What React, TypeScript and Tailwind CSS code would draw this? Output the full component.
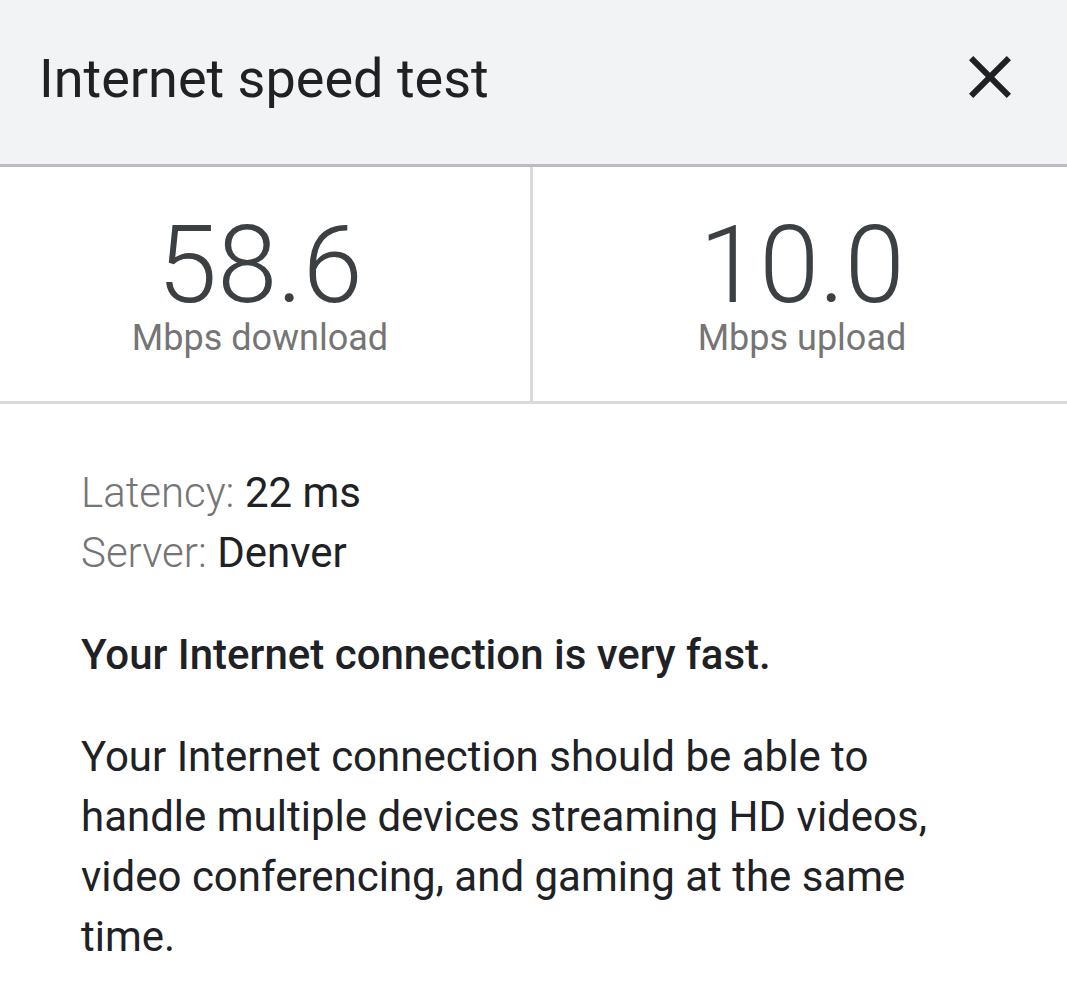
import React from 'react';

const results = [
  { value: '58.6', label: 'Mbps download' },
  { value: '10.0', label: 'Mbps upload' },
];

const details = [
  { name: 'Latency:', value: '22 ms' },
  { name: 'Server:', value: 'Denver' },
];

const App: React.FC = () => {
  return (
    <div className="min-h-[1005px] bg-white font-[Roboto,sans-serif] text-[#202124]">
      <header className="flex h-[167px] items-center justify-between border-b-3 border-[#bcbcc0] bg-[#f1f3f4] pb-2.5 pl-[39px] pr-14">
        <h1 className="pt-1 text-[54px] leading-none">Internet speed test</h1>
        <button aria-label="Close">
          <svg viewBox="5 5 14 14" className="h-[42px] w-[42px]" fill="#202124">
            <path d="M19 6.41L17.59 5 12 10.59 6.41 5 5 6.41 10.59 12 5 17.59 6.41 19 12 13.41 17.59 19 19 17.59 13.41 12z" />
          </svg>
        </button>
      </header>

      <div className="grid h-[237px] grid-cols-[533px_1fr] border-b-3 border-[#dadada]">
        {results.map((result) => (
          <div
            key={result.label}
            className="flex flex-col items-center border-[#dadada] pt-[46px] first:border-r-3 first:pr-2.5 last:pl-1"
          >
            <span className="text-[108px] font-light leading-[104px] text-[#3c4043]">{result.value}</span>
            <span className="text-[36px] leading-[42px] text-[#757575]">{result.label}</span>
          </div>
        ))}
      </div>

      <main className="px-[81px] pt-[59px] text-[42px] leading-[60px]">
        {details.map((item) => (
          <p key={item.name}>
            <span className="font-light text-[#757575]">{item.name}</span> {item.value}
          </p>
        ))}
        <p className="mt-[42px] font-medium">Your Internet connection is very fast.</p>
        <p className="mt-[42px]">
          Your Internet connection should be able to handle multiple devices streaming HD videos, video conferencing,
          and gaming at the same time.
        </p>
      </main>
    </div>
  );
};

export default App;
